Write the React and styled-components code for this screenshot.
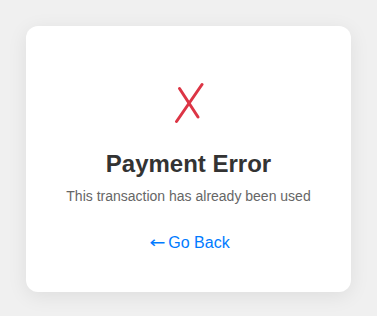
import React from "react";
import styled, { createGlobalStyle } from "styled-components";

const Global = createGlobalStyle`
  html, body { margin: 0; padding: 0; background: #f0f0f0; }
  body { font-family: "Liberation Sans", Arial, sans-serif; }
`;

const Page = styled.div`
  padding: 26px;
  display: flex;
  justify-content: center;
`;

const Card = styled.div`
  width: 100%;
  box-sizing: border-box;
  background: #fff;
  border-radius: 12px;
  box-shadow: 0 4px 20px rgba(0, 0, 0, 0.08);
  padding: 40px 20px;
  height: 266px;
  display: flex;
  flex-direction: column;
  align-items: center;
  text-align: center;
`;

const Icon = styled.svg`
  display: block;
  margin-top: 16px;
  margin-left: 1px;
`;

const Title = styled.h1`
  margin: 26px 0 0;
  font-size: 24px;
  font-weight: bold;
  color: #333;
  line-height: 1.2;
`;

const Message = styled.p`
  margin: 9px 0 0;
  font-size: 14px;
  color: #666;
  line-height: 1.2;
`;

const BackLink = styled.a`
  display: flex;
  align-items: baseline;
  gap: 4px;
  margin-top: 28px;
  font-size: 16px;
  color: #007bff;
  text-decoration: none;
  line-height: 1.2;
`;

const Arrow = styled.span`
  display: inline-block;
  width: 17px;
  font-family: "DejaVu Sans", sans-serif;
  transform: scaleX(1.2);
  transform-origin: left center;
`;

export default function App() {
  return (
    <>
      <Global />
      <Page>
        <Card>
          <Icon width="30" height="42" viewBox="0 0 30 42" aria-label="error">
            <g stroke="#dc3545" strokeWidth="3" strokeLinecap="round" fill="none">
              <path d="M5.5 6.5 L24 35" />
              <path d="M28 2.5 L2.5 39.5" />
            </g>
          </Icon>
          <Title>Payment Error</Title>
          <Message>This transaction has already been used</Message>
          <BackLink href="#">
            <Arrow>←</Arrow>
            <span>Go Back</span>
          </BackLink>
        </Card>
      </Page>
    </>
  );
}
